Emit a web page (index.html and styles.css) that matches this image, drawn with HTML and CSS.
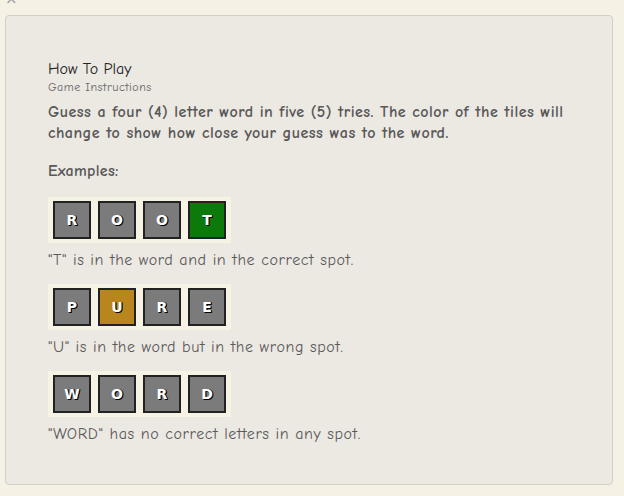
FILE: index.html
```html
<!DOCTYPE html>
<html>
<head>
<meta charset="utf-8">
<link rel="stylesheet" href="styles.css">
</head>
<body>
<span class="close">×</span>
<div class="card">
  <h1 class="title">How To Play</h1>
  <div class="subtitle">Game Instructions</div>
  <p class="intro">Guess a four (4) letter word in five (5) tries. The color of the tiles will change to show how close your guess was to the word.</p>
  <p class="examples">Examples:</p>
  <div class="row">
    <span class="tile">R</span><span class="tile">O</span><span class="tile">O</span><span class="tile green">T</span>
  </div>
  <p class="caption">"T" is in the word and in the correct spot.</p>
  <div class="row">
    <span class="tile">P</span><span class="tile gold">U</span><span class="tile">R</span><span class="tile">E</span>
  </div>
  <p class="caption">"U" is in the word but in the wrong spot.</p>
  <div class="row">
    <span class="tile">W</span><span class="tile">O</span><span class="tile">R</span><span class="tile">D</span>
  </div>
  <p class="caption">"WORD" has no correct letters in any spot.</p>
</div>
</body>
</html>
```
FILE: styles.css
```css
html, body {
  margin: 0;
  padding: 0;
  background: #f5f2e5;
  font-family: "Comic Sans MS", "Comic Neue", "Open Sans", sans-serif;
  color: #5a5a5a;
  height: 100%;
  overflow: hidden;
}
.close {
  position: absolute;
  left: 5px;
  top: -8px;
  font-size: 15px;
  line-height: 15px;
  color: #a0a0a0;
  font-family: "DejaVu Sans", sans-serif;
}
.card {
  margin: 15px 0 0 5px;
  width: 608px;
  height: 470px;
  box-sizing: border-box;
  background: #ece8e2;
  border: 1px solid #d3cfc8;
  border-radius: 4px;
  padding: 43px 0 0 42px;
}
.title {
  margin: 0;
  font-size: 16px;
  font-weight: normal;
  color: #222;
  line-height: 20px;
}
.subtitle {
  font-size: 12px;
  letter-spacing: 0.5px;
  color: #666;
  line-height: 15px;
  margin-top: 1px;
}
.intro {
  margin: 7px 0 0;
  font-size: 16px;
  font-weight: bold;
  letter-spacing: 0.45px;
  line-height: 21px;
  width: 540px;
  color: #585858;
}
.examples {
  margin: 17px 0 0;
  font-size: 16px;
  font-weight: bold;
  letter-spacing: 0.3px;
  line-height: 21px;
  color: #585858;
}
.row {
  display: inline-flex;
  gap: 7px;
  padding: 4px 5px;
  background: #f6f2e4;
  margin-top: 15px;
}
.caption + .row {
  margin-top: 13px;
}
.tile {
  width: 38px;
  height: 38px;
  box-sizing: border-box;
  border: 2px solid #222;
  background: #7b7b7b;
  display: flex;
  align-items: center;
  justify-content: center;
  color: #fff;
  font-family: "DejaVu Sans", sans-serif;
  font-weight: bold;
  font-size: 14px;
  text-shadow: 1px 1px 0 #000, 1px 0 0 #000;
}
.tile.green { background: #0b7a0b; }
.tile.gold { background: #b8861c; }
.caption {
  margin: 7px 0 0;
  font-size: 16px;
  letter-spacing: 0.6px;
  line-height: 21px;
  color: #5a5a5a;
}
```
